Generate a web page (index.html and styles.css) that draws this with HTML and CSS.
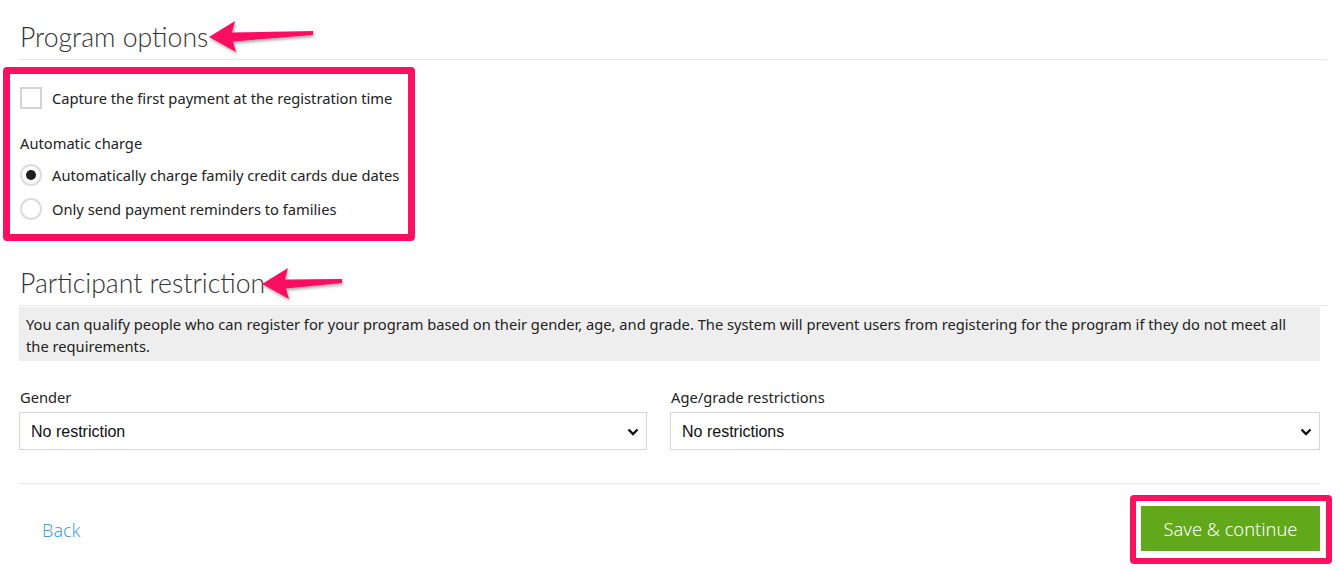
FILE: index.html
```html
<!DOCTYPE html>
<html lang="en">
<head>
<meta charset="utf-8">
<title>Program options</title>
<link rel="stylesheet" href="styles.css">
</head>
<body>
<div class="page">
  <h2 class="section-title first">Program options</h2>

  <div class="options">
    <label class="check-row">
      <span class="checkbox"></span>
      <span>Capture the first payment at the registration time</span>
    </label>
    <div class="group-label">Automatic charge</div>
    <label class="radio-row">
      <span class="radio checked"></span>
      <span>Automatically charge family credit cards due dates</span>
    </label>
    <label class="radio-row second">
      <span class="radio"></span>
      <span>Only send payment reminders to families</span>
    </label>
  </div>

  <h2 class="section-title second">Participant restriction</h2>
  <div class="info">You can qualify people who can register for your program based on their gender, age, and grade. The system will prevent users from registering for the program if they do not meet all the requirements.</div>

  <div class="fields">
    <div class="field">
      <div class="field-label">Gender</div>
      <div class="select">
        <span>No restriction</span>
        <svg class="chev" width="12" height="8" viewBox="0 0 12 8"><path d="M1.5 1.5 L6 6 L10.5 1.5" fill="none" stroke="#111" stroke-width="2.4"/></svg>
      </div>
    </div>
    <div class="field">
      <div class="field-label">Age/grade restrictions</div>
      <div class="select">
        <span>No restrictions</span>
        <svg class="chev" width="12" height="8" viewBox="0 0 12 8"><path d="M1.5 1.5 L6 6 L10.5 1.5" fill="none" stroke="#111" stroke-width="2.4"/></svg>
      </div>
    </div>
  </div>

  <div class="footer">
    <a class="back" href="#">Back</a>
    <button class="save" type="button">Save &amp; continue</button>
  </div>
</div>

<div class="annot box1"></div>
<div class="annot box2"></div>
<svg class="annot arrow1" width="120" height="40" viewBox="205 18 120 40">
  <defs>
    <filter id="sh" x="-20%" y="-40%" width="140%" height="180%">
      <feDropShadow dx="1" dy="2" stdDeviation="1.5" flood-color="#000" flood-opacity="0.35"/>
    </filter>
  </defs>
  <path d="M209 37 L235 21 L232 32.5 L313 31 L313 35 L233 41.5 L236 52 Z" fill="#fb1160" filter="url(#sh)"/>
</svg>
<svg class="annot arrow2" width="100" height="40" viewBox="258 265 100 40">
  <defs>
    <filter id="sh2" x="-20%" y="-40%" width="140%" height="180%">
      <feDropShadow dx="1" dy="2" stdDeviation="1.5" flood-color="#000" flood-opacity="0.35"/>
    </filter>
  </defs>
  <path d="M262 284 L288 268 L285 279.5 L342 279 L342 283 L286 288.5 L289 299 Z" fill="#fb1160" filter="url(#sh2)"/>
</svg>
</body>
</html>
```

FILE: styles.css
```css
html, body {
  margin: 0;
  padding: 0;
  background: #ffffff;
}

body {
  font-family: "Noto Sans", "Open Sans", sans-serif;
  font-size: 14.7px;
  color: #222;
  position: relative;
  width: 1340px;
  height: 571px;
  overflow: hidden;
}

.page {
  margin-left: 19px;
  width: 1301px;
}

.section-title {
  margin: 0;
  font-family: Lato, "Open Sans", sans-serif;
  font-weight: 300;
  font-size: 26.6px;
  line-height: 32px;
  color: #333;
  padding: 0 0 6px 1px;
  border-bottom: 1px solid #e6e6e6;
}

.section-title.first {
  padding-top: 21px;
  margin-right: -7px;
}

.section-title.second {
  margin-top: 47px;
  margin-right: -7px;
}

.options {
  padding-top: 27px;
  padding-left: 1px;
}

.check-row,
.radio-row {
  display: flex;
  align-items: center;
  gap: 10px;
  height: 22px;
  line-height: 22px;
}

.checkbox {
  box-sizing: border-box;
  width: 22px;
  height: 22px;
  border: 2px solid #d4d4d4;
  background: #fff;
}

.group-label {
  margin-top: 23px;
  line-height: 22px;
  margin-bottom: 10px;
}

.radio-row.second {
  margin-top: 12px;
}

.radio {
  box-sizing: border-box;
  width: 22px;
  height: 22px;
  border-radius: 50%;
  border: 2px solid #dcdcdc;
  background: #fff;
  display: flex;
  align-items: center;
  justify-content: center;
}

.radio.checked::after {
  content: "";
  width: 10px;
  height: 10px;
  border-radius: 50%;
  background: #1e1e1e;
}

.info {
  margin-top: 1px;
  background: #eeeeee;
  padding: 6px 20px 4px 7px;
  line-height: 22px;
}

.fields {
  display: grid;
  grid-template-columns: 628px 1fr;
  column-gap: 23px;
  margin-top: 25px;
}

.field-label {
  line-height: 22px;
  padding-left: 1px;
  margin-bottom: 4px;
}

.select {
  box-sizing: border-box;
  height: 38px;
  border: 1px solid #d6d6d6;
  display: flex;
  align-items: center;
  justify-content: space-between;
  padding: 1px 7px 0 11px;
  font-family: "Liberation Sans", Arial, sans-serif;
  font-size: 16px;
  color: #111;
  background: #fff;
}

.chev {
  display: block;
}

.footer {
  margin-top: 33px;
  border-top: 1px solid #e8e8e8;
  padding-top: 22px;
  display: flex;
  align-items: center;
  justify-content: space-between;
}

.back {
  margin-left: 23px;
  margin-top: 3px;
  color: #4aa3df;
  text-decoration: none;
  font-size: 18px;
  font-weight: 300;
}

.save {
  height: 45px;
  width: 179px;
  border: none;
  background: #62a81b;
  color: #ffffff;
  font-family: "Noto Sans", "Open Sans", sans-serif;
  font-size: 18.3px;
  font-weight: 300;
  padding: 0;
}

.annot {
  position: absolute;
}

.box1 {
  left: 3px;
  top: 67px;
  width: 412px;
  height: 174px;
  box-sizing: border-box;
  border: 7px solid #fb1160;
  border-radius: 4px;
}

.box2 {
  left: 1130px;
  top: 495px;
  width: 202px;
  height: 69px;
  box-sizing: border-box;
  border: 6px solid #fb1160;
  border-radius: 4px;
}

.arrow1 {
  left: 205px;
  top: 18px;
}

.arrow2 {
  left: 258px;
  top: 265px;
}
```
